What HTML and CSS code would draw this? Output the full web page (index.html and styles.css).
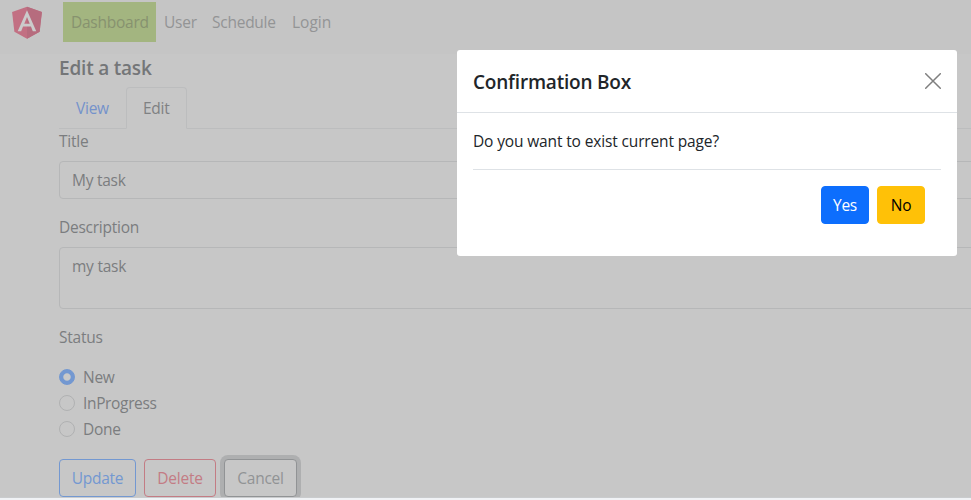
FILE: index.html
```html
<!DOCTYPE html>
<html lang="en">
<head>
<meta charset="utf-8">
<title>Edit a task</title>
<link rel="stylesheet" href="styles.css">
</head>
<body>
<div class="page">
  <nav class="navbar">
    <svg class="logo" viewBox="0 0 250 250">
      <path fill="#c27083" d="M125 30 31.9 63.2 46.1 186.3 125 230 203.9 186.3 218.1 63.2z"/>
      <path fill="#b66c7e" d="M125 30V230L203.9 186.3 218.1 63.2z"/>
      <path fill="#cbcbcb" d="M125 52.1 66.8 182.6h21.7l11.7-29.2h49.4l11.7 29.2H183zM142 135.4H108l17-40.9z"/>
    </svg>
    <a class="nav-link nav-link--active">Dashboard</a>
    <a class="nav-link nav-user">User</a>
    <a class="nav-link nav-schedule">Schedule</a>
    <a class="nav-link nav-login">Login</a>
  </nav>
  <main class="container">
    <h1>Edit a task</h1>
    <div class="tabs"><a class="tab">View</a><a class="tab tab--active">Edit</a></div>
    <label class="label">Title</label>
    <div class="control">My task</div>
    <label class="label label--spaced">Description</label>
    <div class="control control--area">my task</div>
    <div class="label label--status">Status</div>
    <div class="radios">
      <div class="radio"><i class="dot dot--on"></i><span>New</span></div>
      <div class="radio"><i class="dot"></i><span class="in-progress">InProgress</span></div>
      <div class="radio"><i class="dot"></i><span>Done</span></div>
    </div>
    <div class="actions">
      <button class="btn update">Update</button>
      <button class="btn delete">Delete</button>
      <button class="btn cancel">Cancel</button>
    </div>
  </main>
</div>
<section class="modal">
  <header class="modal-header">
    <h2>Confirmation Box</h2>
    <svg class="close" viewBox="0 0 16 16"><path d="M.7.7 15.3 15.3M15.3.7.7 15.3" stroke="#7f7f7f" stroke-width="1.5" stroke-linecap="round"/></svg>
  </header>
  <div class="modal-body">
    <p>Do you want to exist current page?</p>
    <div class="modal-footer">
      <button class="btn yes">Yes</button>
      <button class="btn no">No</button>
    </div>
  </div>
</section>
</body>
</html>
```
FILE: styles.css
```css
* { box-sizing: border-box; }
body {
  margin: 0;
  height: 500px;
  overflow: hidden;
  background: #f0f2f5;
  color: #7b7d7f;
  font: 15.5px/24px "Segoe UI", "Open Sans", sans-serif;
  letter-spacing: -0.25px;
}
.page {
  height: 498px;
  overflow: hidden;
  background: #c7c7c7;
  border-bottom: 1px solid #c9cbcd;
}
.navbar {
  display: flex;
  align-items: flex-start;
  height: 54px;
  padding: 2px 0 0 7px;
  background: #c5c5c5;
}
.logo { width: 40px; height: 40px; margin-right: 16px; }
.nav-link { height: 40px; padding: 8px; color: #939495; white-space: nowrap; }
.nav-link--active { width: 93px; background: #a3b580; color: #87926f; }
.nav-user { width: 48px; }
.nav-schedule { width: 80px; }
.nav-login { letter-spacing: 0; }
.container { width: 1000px; margin-left: 59px; }
h1, h2 { margin: 0; font-size: 19px; font-weight: 600; line-height: 24px; letter-spacing: -0.2px; }
h1 { padding-top: 2px; height: 33px; color: #747678; }
h2 { padding-top: 2px; }
.tabs { display: flex; height: 42px; border-bottom: 1px solid #bcbdbe; }
.tab { width: 67px; height: 42px; padding: 8px 16px; border: 1px solid transparent; color: #7492cb; }
.tab--active {
  width: 61px;
  border-color: #bcbdbe #bcbdbe #c7c7c7;
  border-radius: 4px 4px 0 0;
  color: #7f8183;
}
.label { display: block; height: 32px; }
.control {
  height: 38px;
  padding: 6px 12px;
  border: 1px solid #b6b7b8;
  border-radius: 4px;
}
.label--spaced { margin-top: 16px; }
.control--area { height: 62px; }
.label--status { margin-top: 16px; height: 39px; }
.radio { display: flex; height: 26px; align-items: center; gap: 8px; }
.in-progress { letter-spacing: -0.35px; }
.dot { width: 16px; height: 16px; border: 1px solid #b0b1b2; border-radius: 50%; }
.dot--on {
  border-color: #7398d1;
  background: radial-gradient(circle, #c9c9c9 3.2px, #7398d1 4.2px);
}
.actions { display: flex; gap: 8px; margin-top: 17px; }
.btn {
  height: 38px;
  padding: 0;
  border: 1px solid;
  border-radius: 4px;
  background: transparent;
  font: inherit;
  letter-spacing: inherit;
}
.update { width: 77px; color: #7398d1; }
.delete { width: 72px; color: #c37c84; }
.cancel { width: 73px; color: #919395; box-shadow: 0 0 0 4px #aeafb0; background: #c7c7c7; }
.modal {
  position: absolute;
  top: 50px;
  left: 457px;
  width: 500px;
  height: 206px;
  border-radius: 3px;
  background: #fff;
  color: #212529;
}
.modal-header {
  display: flex;
  justify-content: space-between;
  align-items: center;
  height: 63px;
  padding: 0 16px;
  border-bottom: 1px solid #dee2e6;
}
.close { width: 16px; height: 16px; }
.modal-body { padding: 16px; }
p { margin: 0; height: 41px; border-bottom: 1px solid #dee2e6; letter-spacing: -0.14px; }
.modal-footer { display: flex; justify-content: flex-end; gap: 8px; padding: 16px 16px 0; }
.yes { width: 48px; background: #0d6efd; border-color: #0d6efd; color: #fff; }
.no { width: 48px; background: #ffc107; border-color: #ffc107; color: #000; }
```
